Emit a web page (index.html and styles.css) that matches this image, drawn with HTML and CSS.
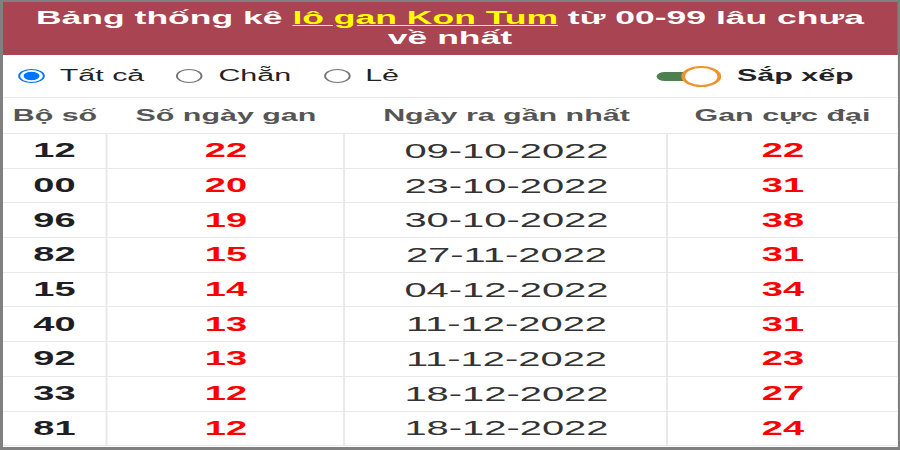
FILE: index.html
```html
<!DOCTYPE html>
<html lang="vi">
<head>
<meta charset="utf-8">
<title>Lô gan Kon Tum</title>
<link rel="stylesheet" href="styles.css">
</head>
<body>
<div class="card">
  <div class="title">Bảng thống kê <a href="#">lô gan Kon Tum</a> từ 00-99 lâu chưa<br>về nhất</div>
  <div class="filters">
    <label class="opt"><input type="radio" name="f" checked><span>Tất cả</span></label>
    <label class="opt"><input type="radio" name="f"><span>Chẵn</span></label>
    <label class="opt"><input type="radio" name="f"><span>Lẻ</span></label>
    <label class="sort"><span class="switch"><span class="track"></span><span class="knob"></span></span><span>Sắp xếp</span></label>
  </div>
  <table class="stats">
    <colgroup><col class="c1"><col class="c2"><col class="c3"><col class="c4"></colgroup>
    <thead>
      <tr><th>Bộ số</th><th>Số ngày gan</th><th>Ngày ra gần nhất</th><th>Gan cực đại</th></tr>
    </thead>
    <tbody>
      <tr><td class="num">12</td><td class="red">22</td><td class="date">09-10-2022</td><td class="red">22</td></tr>
      <tr><td class="num">00</td><td class="red">20</td><td class="date">23-10-2022</td><td class="red">31</td></tr>
      <tr><td class="num">96</td><td class="red">19</td><td class="date">30-10-2022</td><td class="red">38</td></tr>
      <tr><td class="num">82</td><td class="red">15</td><td class="date">27-11-2022</td><td class="red">31</td></tr>
      <tr><td class="num">15</td><td class="red">14</td><td class="date">04-12-2022</td><td class="red">34</td></tr>
      <tr><td class="num">40</td><td class="red">13</td><td class="date">11-12-2022</td><td class="red">31</td></tr>
      <tr><td class="num">92</td><td class="red">13</td><td class="date">11-12-2022</td><td class="red">23</td></tr>
      <tr><td class="num">33</td><td class="red">12</td><td class="date">18-12-2022</td><td class="red">27</td></tr>
      <tr><td class="num">81</td><td class="red">12</td><td class="date">18-12-2022</td><td class="red">24</td></tr>
    </tbody>
  </table>
</div>
</body>
</html>
```
FILE: styles.css
```css
html, body {
  margin: 0;
  padding: 0;
  height: 450px;
  overflow: hidden;
  background: #808080;
}

.card {
  width: 470.53px;
  height: 445px;
  margin: 2px 0 0 3px;
  overflow: hidden;
  background: #fff;
  transform: scaleX(1.9);
  transform-origin: 0 0;
  font-family: "Liberation Sans", Arial, sans-serif;
  color: #222;
}

.title {
  background: #a94452;
  color: #fff;
  font-weight: bold;
  font-size: 18.7px;
  line-height: 20px;
  text-align: center;
  padding: 6px 0 7px;
}

.title a {
  color: #ffff00;
  text-decoration: underline;
}

.filters {
  display: flex;
  align-items: center;
  height: 42px;
  padding: 0 22.8px 0 7.9px;
  border-bottom: 1px solid #ececec;
  font-size: 16px;
}

.opt {
  display: flex;
  align-items: center;
  gap: 8px;
  margin-right: 17px;
}

.opt input {
  margin: 0;
  width: 14px;
  height: 14px;
}

.sort {
  margin-left: auto;
  display: flex;
  align-items: center;
  gap: 8px;
  font-weight: bold;
}

.switch {
  position: relative;
  width: 34px;
  height: 21px;
  display: block;
}

.track {
  position: absolute;
  left: 0;
  top: 6px;
  width: 28px;
  height: 9px;
  border-radius: 5px;
  background: #4e7f4e;
}

.knob {
  position: absolute;
  right: 0;
  top: 0;
  width: 21px;
  height: 21px;
  box-sizing: border-box;
  border-radius: 50%;
  background: #fff;
  border: 2px solid #f0922e;
}

.stats {
  width: 100%;
  table-layout: fixed;
  border-collapse: collapse;
}

.c1 { width: 54.7px; }
.c2 { width: 125.3px; }
.c3 { width: 170px; }
.c4 { width: 120.5px; }

.stats th {
  height: 35px;
  padding: 0;
  font-size: 16px;
  font-weight: bold;
  color: #555;
  text-align: center;
  border-bottom: 1px solid #e8e8e8;
}

.stats td {
  height: 33.7px;
  padding: 0;
  text-align: center;
  font-size: 20px;
  border-bottom: 1px solid #e8e8e8;
  border-left: 1px solid #e8e8e8;
}

.stats td:first-child {
  border-left: none;
}

.num {
  font-weight: bold;
  color: #1e1e24;
  font-size: 19px;
}

.red {
  font-weight: bold;
  color: #ff0000;
}

.stats td.date {
  color: #333;
  font-size: 21px;
}
```
